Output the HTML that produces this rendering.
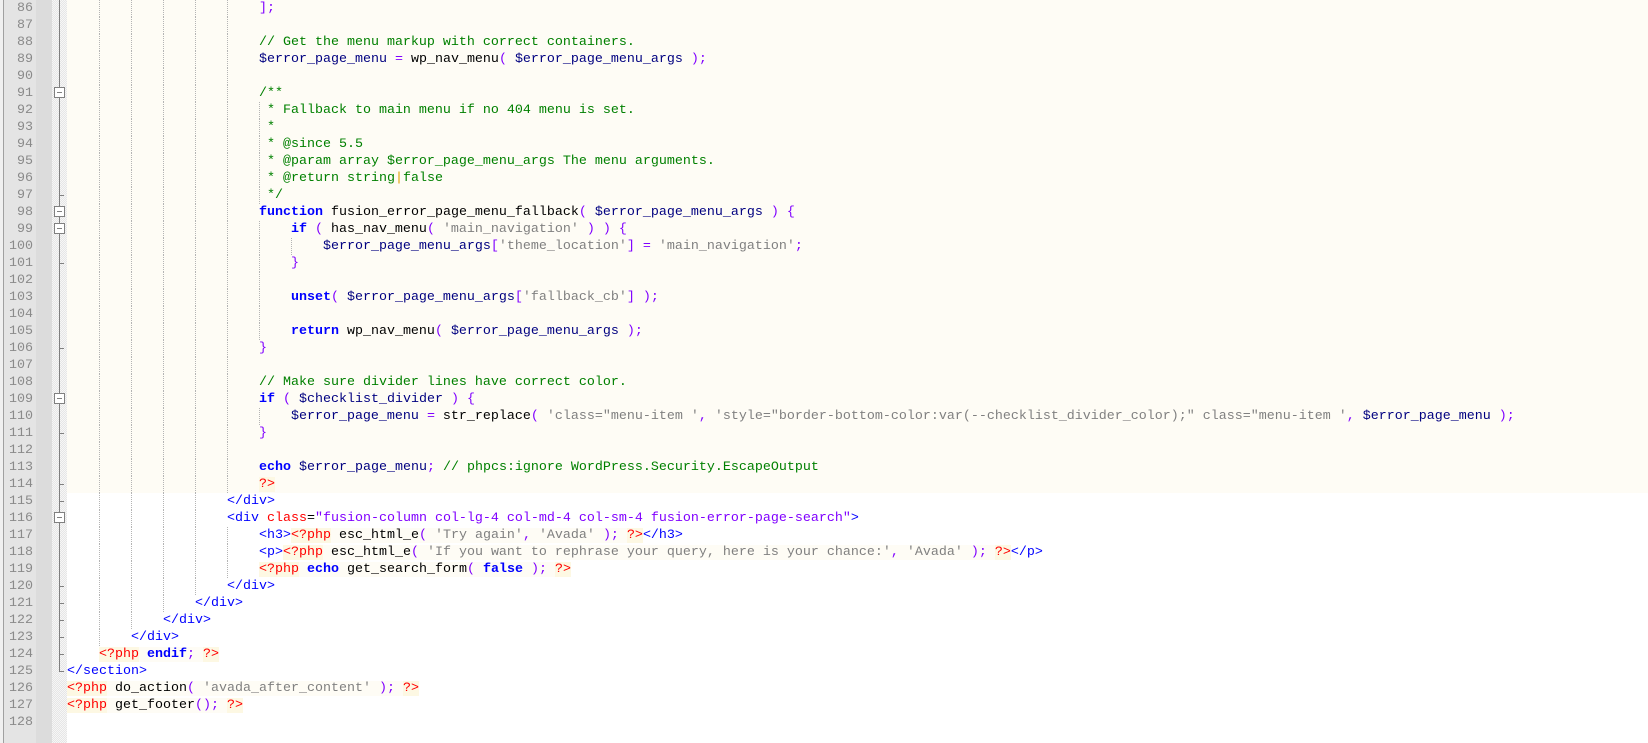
<!DOCTYPE html>
<html><head><meta charset="utf-8"><style>
html,body{margin:0;padding:0;width:1648px;height:743px;overflow:hidden;background:#fff;}
body{font-family:"Liberation Mono",monospace;font-size:13.33px;}
#lb{position:absolute;left:0;top:0;width:3px;height:743px;background:#f0f0f0;border-right:1px solid #a0a0a0;}
#nums{position:absolute;left:4px;top:0;width:32px;height:743px;background:#e4e4e4;}
#nums2{position:absolute;left:36px;top:0;width:16px;height:743px;background:#dcdcdc;}
#nums div{height:17px;line-height:17px;text-align:right;padding-right:3px;color:#8a8a8a;}
#fold{position:absolute;left:52px;top:0;width:15px;height:743px;background:repeating-conic-gradient(#e6e6e6 0 25%,#f6f6f6 0 50%) 0 0/2px 2px;}
#vl{position:absolute;left:59px;top:0;width:1px;height:2131px;background:#808080;}
.bx{position:absolute;left:54px;width:9px;height:9px;border:1px solid #808080;background:#fff;}
.bx:after{content:"";position:absolute;left:2px;top:4px;width:5px;height:1px;background:#808080;}
.tk{position:absolute;left:59px;width:5px;height:1px;background:#808080;}
#code{position:absolute;left:67px;top:0;right:0;}
.l{position:relative;height:17px;line-height:17px;white-space:pre;color:#000;}
.y{background:#fefcf5;}
.g{position:absolute;top:0;width:1px;height:17px;background:repeating-linear-gradient(#b4b4b4 0 1px,transparent 1px 2px);}
.g1{left:32px}.g2{left:64px}.g3{left:96px}.g4{left:128px}.g5{left:160px}.g6{left:192px}.g7{left:224px}
kw{color:#0000ff;font-weight:bold;}
vr{color:#000080;}
st{color:#808080;}
op{color:#8000ff;}
cm{color:#008000;}
tg{color:#ff0000;background:#fdf8e3;}
pp{background:#fefcf5;}
ht{color:#0000ff;}
at{color:#ff0000;}
av{color:#8000ff;}
</style></head><body>
<div id="lb"></div>
<div id="nums2"></div>
<div id="nums">
<div>86</div><div>87</div><div>88</div><div>89</div><div>90</div><div>91</div><div>92</div><div>93</div><div>94</div><div>95</div><div>96</div><div>97</div><div>98</div><div>99</div><div>100</div><div>101</div><div>102</div><div>103</div><div>104</div><div>105</div><div>106</div><div>107</div><div>108</div><div>109</div><div>110</div><div>111</div><div>112</div><div>113</div><div>114</div><div>115</div><div>116</div><div>117</div><div>118</div><div>119</div><div>120</div><div>121</div><div>122</div><div>123</div><div>124</div><div>125</div><div>126</div><div>127</div><div>128</div>
</div>
<div id="fold">
<div id="vl" style="left:7px;height:672px"></div>
</div>
<div class="tk" style="top:195px"></div>
<div class="tk" style="top:263px"></div>
<div class="tk" style="top:348px"></div>
<div class="tk" style="top:433px"></div>
<div class="tk" style="top:484px"></div>
<div class="tk" style="top:501px"></div>
<div class="tk" style="top:586px"></div>
<div class="tk" style="top:603px"></div>
<div class="tk" style="top:620px"></div>
<div class="tk" style="top:637px"></div>
<div class="tk" style="top:654px"></div>
<div class="tk" style="top:671px"></div>
<div class="bx" style="top:87px"></div>
<div class="bx" style="top:206px"></div>
<div class="bx" style="top:223px"></div>
<div class="bx" style="top:393px"></div>
<div class="bx" style="top:512px"></div>
<div id="code">
<div class="l y"><i class="g g1"></i><i class="g g2"></i><i class="g g3"></i><i class="g g4"></i><i class="g g5"></i>                        <op>];</op></div>
<div class="l y"><i class="g g1"></i><i class="g g2"></i><i class="g g3"></i><i class="g g4"></i><i class="g g5"></i> </div>
<div class="l y"><i class="g g1"></i><i class="g g2"></i><i class="g g3"></i><i class="g g4"></i><i class="g g5"></i>                        <cm>// Get the menu markup with correct containers.</cm></div>
<div class="l y"><i class="g g1"></i><i class="g g2"></i><i class="g g3"></i><i class="g g4"></i><i class="g g5"></i>                        <vr>$error_page_menu</vr> <op>=</op> wp_nav_menu<op>(</op> <vr>$error_page_menu_args</vr> <op>);</op></div>
<div class="l y"><i class="g g1"></i><i class="g g2"></i><i class="g g3"></i><i class="g g4"></i><i class="g g5"></i> </div>
<div class="l y"><i class="g g1"></i><i class="g g2"></i><i class="g g3"></i><i class="g g4"></i><i class="g g5"></i>                        <cm>/**</cm></div>
<div class="l y"><i class="g g1"></i><i class="g g2"></i><i class="g g3"></i><i class="g g4"></i><i class="g g5"></i><i class="g g6"></i>                        <cm> * Fallback to main menu if no 404 menu is set.</cm></div>
<div class="l y"><i class="g g1"></i><i class="g g2"></i><i class="g g3"></i><i class="g g4"></i><i class="g g5"></i><i class="g g6"></i>                        <cm> *</cm></div>
<div class="l y"><i class="g g1"></i><i class="g g2"></i><i class="g g3"></i><i class="g g4"></i><i class="g g5"></i><i class="g g6"></i>                        <cm> * @since 5.5</cm></div>
<div class="l y"><i class="g g1"></i><i class="g g2"></i><i class="g g3"></i><i class="g g4"></i><i class="g g5"></i><i class="g g6"></i>                        <cm> * @param array $error_page_menu_args The menu arguments.</cm></div>
<div class="l y"><i class="g g1"></i><i class="g g2"></i><i class="g g3"></i><i class="g g4"></i><i class="g g5"></i><i class="g g6"></i>                        <cm> * @return string<span style="color:#e0a000">|</span>false</cm></div>
<div class="l y"><i class="g g1"></i><i class="g g2"></i><i class="g g3"></i><i class="g g4"></i><i class="g g5"></i><i class="g g6"></i>                        <cm> */</cm></div>
<div class="l y"><i class="g g1"></i><i class="g g2"></i><i class="g g3"></i><i class="g g4"></i><i class="g g5"></i>                        <kw>function</kw> fusion_error_page_menu_fallback<op>(</op> <vr>$error_page_menu_args</vr> <op>)</op> <op>{</op></div>
<div class="l y"><i class="g g1"></i><i class="g g2"></i><i class="g g3"></i><i class="g g4"></i><i class="g g5"></i><i class="g g6"></i>                            <kw>if</kw> <op>(</op> has_nav_menu<op>(</op> <st>'main_navigation'</st> <op>)</op> <op>)</op> <op>{</op></div>
<div class="l y"><i class="g g1"></i><i class="g g2"></i><i class="g g3"></i><i class="g g4"></i><i class="g g5"></i><i class="g g6"></i><i class="g g7"></i>                                <vr>$error_page_menu_args</vr><op>[</op><st>'theme_location'</st><op>]</op> <op>=</op> <st>'main_navigation'</st><op>;</op></div>
<div class="l y"><i class="g g1"></i><i class="g g2"></i><i class="g g3"></i><i class="g g4"></i><i class="g g5"></i><i class="g g6"></i>                            <op>}</op></div>
<div class="l y"><i class="g g1"></i><i class="g g2"></i><i class="g g3"></i><i class="g g4"></i><i class="g g5"></i><i class="g g6"></i> </div>
<div class="l y"><i class="g g1"></i><i class="g g2"></i><i class="g g3"></i><i class="g g4"></i><i class="g g5"></i><i class="g g6"></i>                            <kw>unset</kw><op>(</op> <vr>$error_page_menu_args</vr><op>[</op><st>'fallback_cb'</st><op>]</op> <op>);</op></div>
<div class="l y"><i class="g g1"></i><i class="g g2"></i><i class="g g3"></i><i class="g g4"></i><i class="g g5"></i><i class="g g6"></i> </div>
<div class="l y"><i class="g g1"></i><i class="g g2"></i><i class="g g3"></i><i class="g g4"></i><i class="g g5"></i><i class="g g6"></i>                            <kw>return</kw> wp_nav_menu<op>(</op> <vr>$error_page_menu_args</vr> <op>);</op></div>
<div class="l y"><i class="g g1"></i><i class="g g2"></i><i class="g g3"></i><i class="g g4"></i><i class="g g5"></i>                        <op>}</op></div>
<div class="l y"><i class="g g1"></i><i class="g g2"></i><i class="g g3"></i><i class="g g4"></i><i class="g g5"></i> </div>
<div class="l y"><i class="g g1"></i><i class="g g2"></i><i class="g g3"></i><i class="g g4"></i><i class="g g5"></i>                        <cm>// Make sure divider lines have correct color.</cm></div>
<div class="l y"><i class="g g1"></i><i class="g g2"></i><i class="g g3"></i><i class="g g4"></i><i class="g g5"></i>                        <kw>if</kw> <op>(</op> <vr>$checklist_divider</vr> <op>)</op> <op>{</op></div>
<div class="l y"><i class="g g1"></i><i class="g g2"></i><i class="g g3"></i><i class="g g4"></i><i class="g g5"></i><i class="g g6"></i>                            <vr>$error_page_menu</vr> <op>=</op> str_replace<op>(</op> <st>'class="menu-item '</st><op>,</op> <st>'style="border-bottom-color:var(--checklist_divider_color);" class="menu-item '</st><op>,</op> <vr>$error_page_menu</vr> <op>);</op></div>
<div class="l y"><i class="g g1"></i><i class="g g2"></i><i class="g g3"></i><i class="g g4"></i><i class="g g5"></i>                        <op>}</op></div>
<div class="l y"><i class="g g1"></i><i class="g g2"></i><i class="g g3"></i><i class="g g4"></i><i class="g g5"></i> </div>
<div class="l y"><i class="g g1"></i><i class="g g2"></i><i class="g g3"></i><i class="g g4"></i><i class="g g5"></i>                        <kw>echo</kw> <vr>$error_page_menu</vr><op>;</op> <cm>// phpcs:ignore WordPress.Security.EscapeOutput</cm></div>
<div class="l y"><i class="g g1"></i><i class="g g2"></i><i class="g g3"></i><i class="g g4"></i><i class="g g5"></i>                        <tg>?&gt;</tg></div>
<div class="l"><i class="g g1"></i><i class="g g2"></i><i class="g g3"></i><i class="g g4"></i>                    <ht>&lt;/div&gt;</ht></div>
<div class="l"><i class="g g1"></i><i class="g g2"></i><i class="g g3"></i><i class="g g4"></i>                    <ht>&lt;div</ht> <at>class</at>=<av>"fusion-column col-lg-4 col-md-4 col-sm-4 fusion-error-page-search"</av><ht>&gt;</ht></div>
<div class="l"><i class="g g1"></i><i class="g g2"></i><i class="g g3"></i><i class="g g4"></i><i class="g g5"></i>                        <ht>&lt;h3&gt;</ht><tg>&lt;?php</tg><pp> esc_html_e<op>(</op> <st>'Try again'</st><op>,</op> <st>'Avada'</st> <op>);</op> </pp><tg>?&gt;</tg><ht>&lt;/h3&gt;</ht></div>
<div class="l"><i class="g g1"></i><i class="g g2"></i><i class="g g3"></i><i class="g g4"></i><i class="g g5"></i>                        <ht>&lt;p&gt;</ht><tg>&lt;?php</tg><pp> esc_html_e<op>(</op> <st>'If you want to rephrase your query, here is your chance:'</st><op>,</op> <st>'Avada'</st> <op>);</op> </pp><tg>?&gt;</tg><ht>&lt;/p&gt;</ht></div>
<div class="l"><i class="g g1"></i><i class="g g2"></i><i class="g g3"></i><i class="g g4"></i><i class="g g5"></i>                        <tg>&lt;?php</tg><pp> <kw>echo</kw> get_search_form<op>(</op> <kw>false</kw> <op>);</op> </pp><tg>?&gt;</tg></div>
<div class="l"><i class="g g1"></i><i class="g g2"></i><i class="g g3"></i><i class="g g4"></i>                    <ht>&lt;/div&gt;</ht></div>
<div class="l"><i class="g g1"></i><i class="g g2"></i><i class="g g3"></i>                <ht>&lt;/div&gt;</ht></div>
<div class="l"><i class="g g1"></i><i class="g g2"></i>            <ht>&lt;/div&gt;</ht></div>
<div class="l"><i class="g g1"></i>        <ht>&lt;/div&gt;</ht></div>
<div class="l">    <tg>&lt;?php</tg><pp> <kw>endif</kw><op>;</op> </pp><tg>?&gt;</tg></div>
<div class="l"><ht>&lt;/section&gt;</ht></div>
<div class="l"><tg>&lt;?php</tg><pp> do_action<op>(</op> <st>'avada_after_content'</st> <op>);</op> </pp><tg>?&gt;</tg></div>
<div class="l"><tg>&lt;?php</tg><pp> get_footer<op>();</op> </pp><tg>?&gt;</tg></div>
<div class="l"> </div>
</div>
</body></html>
